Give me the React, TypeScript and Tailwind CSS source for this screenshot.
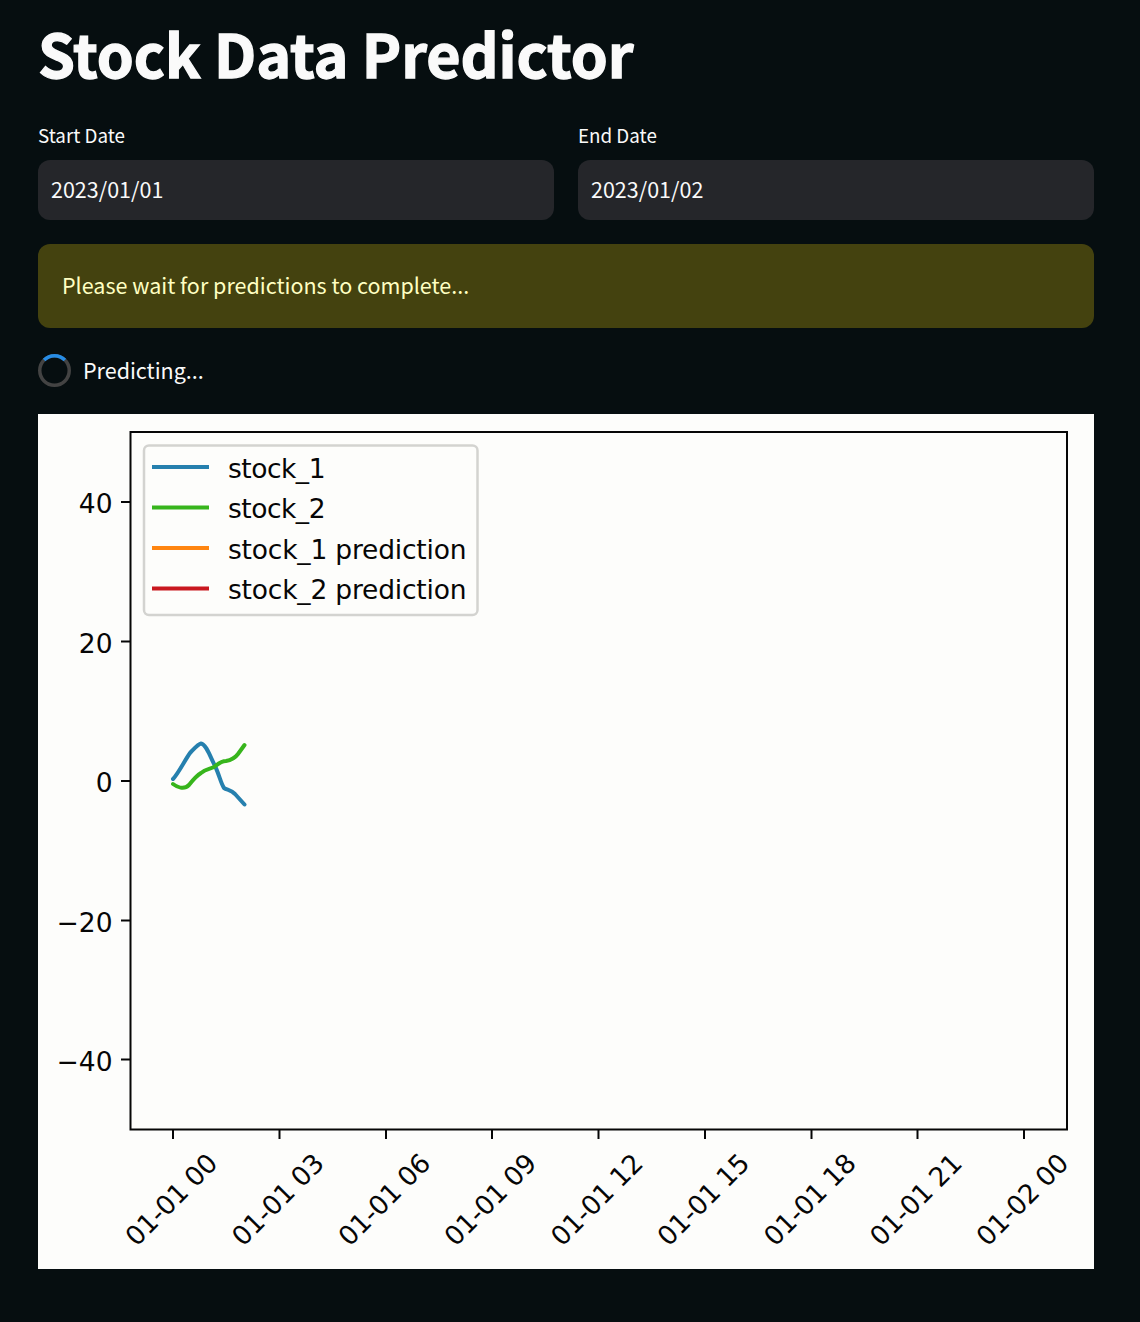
const yTicks = [
  { label: '40', y: 502 },
  { label: '20', y: 641.5 },
  { label: '0', y: 781 },
  { label: '−20', y: 920.5 },
  { label: '−40', y: 1059.5 },
];
const xTicks = [
  { label: '01-01 00', x: 173 },
  { label: '01-01 03', x: 279.5 },
  { label: '01-01 06', x: 386 },
  { label: '01-01 09', x: 492 },
  { label: '01-01 12', x: 598.5 },
  { label: '01-01 15', x: 705 },
  { label: '01-01 18', x: 811.5 },
  { label: '01-01 21', x: 917.5 },
  { label: '01-02 00', x: 1024 },
];
const legend = [
  { label: 'stock_1', color: '#2680ae', y: 467, w: 97.5 },
  { label: 'stock_2', color: '#37b51c', y: 507.5, w: 97.5 },
  { label: 'stock_1 prediction', color: '#ff8510', y: 548, w: 238.5 },
  { label: 'stock_2 prediction', color: '#c9181f', y: 588.5, w: 238.5 },
];

function DateField({ label, value }: { label: string; value: string }) {
  return (
    <label className="flex flex-1 flex-col">
      <span className="h-9 text-[18.8px] leading-[22px]">{label}</span>
      <span className="flex h-[60px] items-center rounded-xl bg-[#25262a] px-[13px] pb-[2px] text-[21.5px] leading-8">
        {value}
      </span>
    </label>
  );
}

function Chart() {
  return (
    <svg
      className="mt-[26px] block h-[855px] w-[1056px] bg-[#fdfdfb]"
      viewBox="38 414 1056 855"
      fontFamily='"DejaVu Sans", sans-serif'
      fontSize="26.5"
      fill="#060606"
    >
      <g stroke="#060606" strokeWidth="2" fill="none">
        <rect x="130.5" y="432" width="936.5" height="697.5" />
        {yTicks.map((t) => (
          <path key={t.label} d={`M121 ${t.y}H130`} />
        ))}
        {xTicks.map((t) => (
          <path key={t.label} d={`M${t.x} 1130V1139`} />
        ))}
      </g>
      {yTicks.map((t) => (
        <text key={t.label} x="112.500" y={t.y + 11} textAnchor="end">
          {t.label}
        </text>
      ))}
      {xTicks.map((t) => (
        <text
          key={t.label}
          transform={`translate(${t.x - 36.5} 1247.5) rotate(-45)`}
          textLength="117"
        >
          {t.label}
        </text>
      ))}
      <g fill="none" strokeWidth="4" strokeLinecap="round" strokeLinejoin="round">
        <path
          d="M173 779C178 774 185 760 190 753C194 749 198 744 201 743.5C206 744 210 756 215 766C219 774 221 784 224 788C227 790 231 790 235 794L244.500 804.500"
          stroke="#2680ae"
        />
        <path
          d="M173 784C177 787 184 790 189 785C193 780 196 776 201 773C206 769 210 769 214 767C218 764 221 761 226 761C232 760 235 758 238 754L244.500 745"
          stroke="#37b51c"
        />
      </g>
      <rect x="144" y="445.500" width="333.500" height="169.500" rx="5" fill="#fdfdfb" stroke="#d3d3d0" strokeWidth="2.500" />
      {legend.map((l) => (
        <g key={l.label}>
          <path d={`M152 ${l.y}H209`} stroke={l.color} strokeWidth="4" />
          <text x="228" y={l.y + 10.5} textLength={l.w}>
            {l.label}
          </text>
        </g>
      ))}
    </svg>
  );
}

export default function App() {
  return (
    <main className="h-[1322px] w-[1140px] overflow-hidden bg-[#060e10] px-[38px] pt-[13px] font-['Noto_Sans_CJK_SC',sans-serif] text-[#fafafa]">
      <h1 className="h-[111px] text-[59.2px] leading-[79px] font-bold tracking-[-0.06px] whitespace-nowrap [-webkit-text-stroke:1.3px_#fafafa]">
        Stock Data Predictor
      </h1>
      <div className="flex w-[1056px] gap-6">
        <DateField label="Start Date" value="2023/01/01" />
        <DateField label="End Date" value="2023/01/02" />
      </div>
      <div className="mt-6 flex h-[84px] w-[1056px] items-center rounded-xl bg-[#44420f] px-6 pb-[2px] text-[21.5px] leading-8 text-[#ffffc2]">
        Please wait for predictions to complete...
      </div>
      <div className="mt-[25px] flex h-[35px] items-center gap-3 text-[21.5px] leading-8">
        <svg className="size-[33px]" viewBox="0 0 33 33" fill="none" strokeWidth="3.500">
          <circle cx="16.500" cy="16.500" r="14.750" stroke="#434343" />
          <path d="M6.100 6.100A14.750 14.750 0 0 1 26.900 6.100" stroke="#268ce6" />
        </svg>
        <span className="pb-[2px]">Predicting...</span>
      </div>
      <Chart />
    </main>
  );
}
